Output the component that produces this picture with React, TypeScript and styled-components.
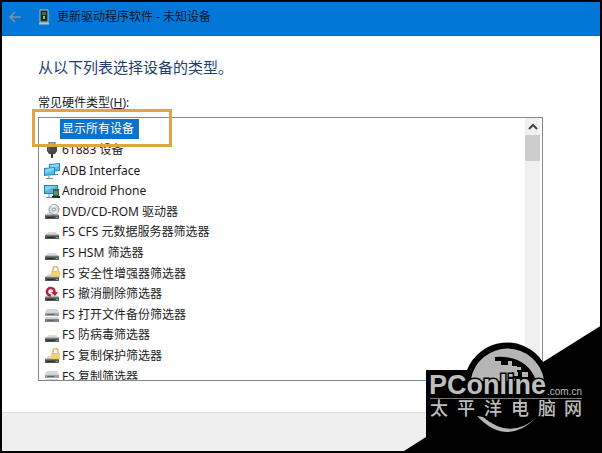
import React, { useState } from "react";
import styled, { createGlobalStyle } from "styled-components";

const GlobalStyle = createGlobalStyle`
  * { box-sizing: border-box; }
  body {
    margin: 0;
    background: #000;
    color: #1c1c1c;
    font: 12px/20px "Noto Sans", "Noto Sans CJK SC", sans-serif;
  }
  button { font: inherit; color: inherit; border: 0; padding: 0; background: none; }
`;

const Dialog = styled.main`
  position: relative;
  display: flex;
  flex-direction: column;
  min-height: 100vh;
  border: 2px solid #000;
  background: #fff;
  overflow: hidden;
`;

const TitleBar = styled.header`
  display: flex;
  align-items: center;
  height: 34px;
  padding: 0 6px 4px;
  background: #0277d7;
  border-bottom: 1px solid #1268ad;
  color: #06172e;
`;

const BackButton = styled.button`
  display: flex;
  width: 14px;
  margin-right: 16px;
`;

const DialogTitle = styled.span`
  margin-left: 7px;
`;

const Content = styled.section`
  flex: 1;
  padding: 19px 57px 30px 36px;
`;

const Heading = styled.h1`
  margin: 0;
  font-size: 15px;
  font-weight: 400;
  line-height: 24px;
  color: #1d4070;
`;

const ListLabel = styled.div`
  margin-top: 14px;
  height: 24px;
`;

const ListFrame = styled.div`
  position: relative;
  display: flex;
  height: 264px;
  border: 1px solid #828790;
`;

const ListViewport = styled.div`
  flex: 1;
  padding-top: 1px;
  overflow: hidden;
`;

const DeviceList = styled.div`
  display: grid;
  grid-auto-rows: 1fr;
  height: 268px;
`;

const DeviceRow = styled.button`
  display: flex;
  align-items: center;
  min-height: 0;
  padding-left: 5px;
  text-align: left;
  outline: none;
`;

const DeviceName = styled.span<{ $selected: boolean }>`
  height: 20px;
  padding: 0 5px 0 2px;
  line-height: 19px;
  white-space: nowrap;
  background: ${(p) => (p.$selected ? "#0a72cb" : "transparent")};
  color: ${(p) => (p.$selected ? "#fff" : "inherit")};
`;

const ScrollBar = styled.div`
  display: flex;
  flex-direction: column;
  width: 15px;
  margin-right: 2px;
  background: #f0f0f0;
`;

const ScrollButton = styled.button`
  display: flex;
  align-items: center;
  justify-content: center;
  height: 17px;
`;

const ScrollThumb = styled.div`
  height: 26px;
  background: #cdcdcd;
`;

const Highlight = styled.div`
  position: absolute;
  top: -9px;
  left: -7px;
  width: 140px;
  height: 38px;
  border: 3px solid #dfa443;
  pointer-events: none;
`;

const Footer = styled.footer`
  height: 39px;
  background: #efefef;
  border-top: 1px solid #dcdcdc;
`;

const Watermark = styled.svg`
  position: absolute;
  right: -2px;
  bottom: -2px;
  pointer-events: none;
`;

type IconKind = "none" | "plug" | "monitors" | "phone" | "disc" | "drive" | "lock" | "undo" | "backup";

const Drive = () => (
  <>
    <path d="M4 8h8l3 4H1z" fill="#d9dcdb" />
    <path d="M1 11h14v4H1z" fill="#4f5553" />
    <path d="M1 11h14" stroke="#989d9b" />
    <path d="M3 13.5h7" stroke="#292e2c" />
    <path d="M12 13.5h2" stroke="#71bd73" />
  </>
);

const Screen = ({ x, y }: { x: number; y: number }) => (
  <g transform={`translate(${x} ${y})`}>
    <path d="M0 1l11-1v8l-11 1z" fill="#2286bd" />
    <path d="M1 2l9-1v6l-9 1z" fill="#53bced" />
    <path d="M1 2l9-1v2l-9 3z" fill="#82d6f5" />
    <path d="M5 9v2M2 11.5h7" stroke="#738c99" />
  </g>
);

function DeviceIcon({ kind }: { kind: IconKind }) {
  return (
    <svg width="16" height="16" viewBox="0 0 16 16" aria-hidden="true">
      {kind === "plug" && (
        <>
          <path d="M5 0h6v4H5z" fill="#aaa" stroke="#666" />
          <path d="M3 4h10v5l-2 3H5L3 9z" fill="#484848" />
          <path d="M8 11v5" stroke="#343434" strokeWidth="2" />
          <path d="M5 5v4" stroke="#777" />
        </>
      )}
      {kind === "monitors" && (
        <>
          <Screen x={5} y={0} />
          <Screen x={0} y={4} />
        </>
      )}
      {kind === "phone" && (
        <>
          <path d="M0 2h14v9H0z" fill="#247fa9" />
          <path d="M1 3h12v7H1z" fill="#55b7df" />
          <path d="M1 3h12L1 8z" fill="#86d1ec" />
          <path d="M5 11v3M2 14.5h7" stroke="#78919a" />
          <path d="M9 6h6v9H9z" fill="#365e4e" />
          <path d="M10 8h4v4h-4z" fill="#5b9664" />
          <path d="M8 14h8" stroke="#24362f" strokeWidth="2" />
        </>
      )}
      {kind === "disc" && (
        <>
          <Drive />
          <ellipse cx="10" cy="5.5" rx="5" ry="5" fill="#d7dbdd" stroke="#90979b" />
          <path d="M10 5L7 1l5 0zM10 6l4 3-4 1z" fill="#f4f5f5" />
          <circle cx="10" cy="5.5" r="1.5" fill="#fff" stroke="#868c90" />
        </>
      )}
      {kind === "drive" && <Drive />}
      {kind === "lock" && (
        <>
          <Drive />
          <path d="M9 5V3a2.500 2.500 0 015 0v2" fill="none" stroke="#d8bd67" strokeWidth="1.5" />
          <path d="M7 5h9v6H7z" fill="#eac95f" />
          <path d="M7 7h9M7 9h9" stroke="#f6df8d" />
        </>
      )}
      {kind === "undo" && (
        <>
          <Drive />
          <path d="M7 9.500A3.800 3.800 0 1110.500 6" fill="none" stroke="#b51f3d" strokeWidth="2.500" />
          <path d="M7 6h7l-3 4z" fill="#b51f3d" />
        </>
      )}
      {kind === "backup" && (
        <>
          <path d="M3 2h10l2 3v3H1V5z" fill="#d5d8d8" />
          <path d="M1 6h14v3H1z" fill="#9da2a2" />
          <path d="M2 10h12l1 2v3H1v-3z" fill="#d0d4d4" />
          <path d="M1 12h14v3H1z" fill="#7e8484" />
          <path d="M3 7.5h7M3 13.5h7" stroke="#626868" />
        </>
      )}
    </svg>
  );
}

const devices: { name: string; icon: IconKind }[] = [
  { name: "显示所有设备", icon: "none" },
  { name: "61883 设备", icon: "plug" },
  { name: "ADB Interface", icon: "monitors" },
  { name: "Android Phone", icon: "phone" },
  { name: "DVD/CD-ROM 驱动器", icon: "disc" },
  { name: "FS CFS 元数据服务器筛选器", icon: "drive" },
  { name: "FS HSM 筛选器", icon: "drive" },
  { name: "FS 安全性增强器筛选器", icon: "lock" },
  { name: "FS 撤消删除筛选器", icon: "undo" },
  { name: "FS 打开文件备份筛选器", icon: "backup" },
  { name: "FS 防病毒筛选器", icon: "drive" },
  { name: "FS 复制保护筛选器", icon: "lock" },
  { name: "FS 复制筛选器", icon: "backup" },
];

function SiteWatermark() {
  return (
    <Watermark width="202" height="133" viewBox="0 0 202 133" role="img" aria-label="PConline.com.cn 太平洋电脑网">
      <path d="M4 133v-2l22-14V50h41A43 43 0 01143 42L202 5v128z" fill="#000" />
      <path d="M71 59A37 37 0 01144 60h-8Q126 35 95 37v4h6v4h7v-4h4v5h5v6h-5v6h12v3H71z" fill="#b5b5b5" />
      <path d="M117 47h4v3h-4zM113 52h5v4h-5zM122 52h6v5h-6z" fill="#b5b5b5" />
      <path d="M77 96q29 31 59 2q-26 22-53-1z" fill="#b5b5b5" />
      <text
        x="29"
        y="74"
        fill="#bebebe"
        stroke="#000"
        strokeWidth="3"
        paintOrder="stroke"
        fontFamily="Liberation Sans, sans-serif"
        fontSize="27"
        fontWeight="700"
      >
        PConline
      </text>
      <text x="147" y="75" fill="#bebebe" fontFamily="Liberation Sans, sans-serif" fontSize="10">
        .com.cn
      </text>
      <path d="M30 78h152v1H30z" fill="#777" />
      <text
        x="30 57 84 111 138 164"
        y="95"
        fill="#bebebe"
        fontFamily="Noto Sans CJK SC, sans-serif"
        fontSize="18"
        fontWeight="500"
      >
        太平洋电脑网
      </text>
    </Watermark>
  );
}

export default function App() {
  const [selected, setSelected] = useState(0);
  return (
    <>
      <GlobalStyle />
      <Dialog>
        <TitleBar>
          <BackButton aria-label="返回">
            <svg width="14" height="14" viewBox="0 0 14 14" fill="none" stroke="#7895aa" strokeWidth="1.5">
              <path d="M13 7H2M7 2L2 7l5 5" />
            </svg>
          </BackButton>
          <svg width="12" height="16" viewBox="0 0 12 16" aria-hidden="true">
            <path d="M2 1h8v12H2z" fill="#17292d" stroke="#b5c3bd" />
            <path d="M4 3h4v3H4z" fill="#476b58" />
            <path d="M5 7h2v3H5z" fill="#6fcb73" />
            <path d="M1 14.500h10" stroke="#bdc5b8" strokeWidth="2" />
          </svg>
          <DialogTitle>更新驱动程序软件 - 未知设备</DialogTitle>
        </TitleBar>
        <Content>
          <Heading>从以下列表选择设备的类型。</Heading>
          <ListLabel id="hardware-label">
            常见硬件类型(<u>H</u>):
          </ListLabel>
          <ListFrame>
            <ListViewport>
              <DeviceList role="listbox" aria-labelledby="hardware-label">
                {devices.map((device, index) => (
                  <DeviceRow
                    key={device.name}
                    role="option"
                    aria-selected={index === selected}
                    onClick={() => setSelected(index)}
                  >
                    <DeviceIcon kind={device.icon} />
                    <DeviceName $selected={index === selected}>{device.name}</DeviceName>
                  </DeviceRow>
                ))}
              </DeviceList>
            </ListViewport>
            <ScrollBar>
              <ScrollButton aria-label="向上滚动">
                <svg width="10" height="8" viewBox="0 0 10 8" fill="none" stroke="#444" strokeWidth="2">
                  <path d="M1 6l4-4 4 4" />
                </svg>
              </ScrollButton>
              <ScrollThumb />
            </ScrollBar>
            <Highlight />
          </ListFrame>
        </Content>
        <Footer />
        <SiteWatermark />
      </Dialog>
    </>
  );
}
